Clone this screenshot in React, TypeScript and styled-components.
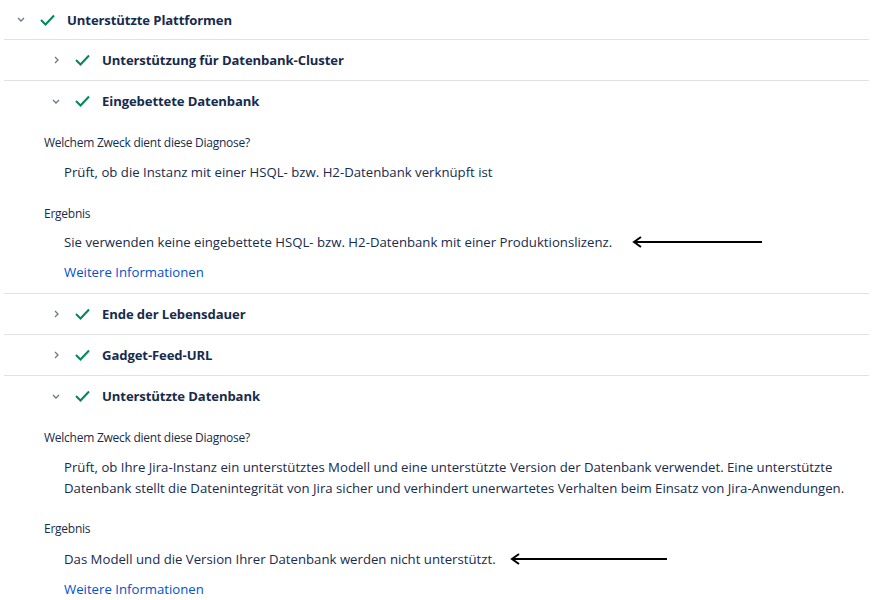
import React from 'react'
import styled, { createGlobalStyle } from 'styled-components'

const GlobalStyle = createGlobalStyle`
  body {
    margin: 0;
    background: #ffffff;
    font-family: "Open Sans", "Noto Sans", "Liberation Sans", sans-serif;
    color: #172b4d;
  }
`

const Page = styled.div`
  padding: 0 5px 0 4px;
  width: 874px;
  box-sizing: border-box;
`

const Section = styled.div<{ $divider?: boolean }>`
  border-top: ${({ $divider }) => ($divider ? '1px solid #dfe1e6' : 'none')};
`

const Header = styled.div<{ $level: number }>`
  display: flex;
  align-items: center;
  height: ${({ $level }) => ($level === 0 ? 39 : 40)}px;
  padding-left: ${({ $level }) => ($level === 0 ? 12 : 47)}px;
`

const Chevron = styled.span`
  display: flex;
  align-items: center;
  justify-content: center;
  width: 10px;
  color: #6b778c;
`

const Check = styled.span`
  display: flex;
  align-items: center;
  margin-left: 14px;
  margin-right: 12px;
  color: #00875a;
`

const Title = styled.span`
  font-size: 13.1px;
  font-weight: 700;
  color: #172b4d;
  letter-spacing: -0.1px;
`

const Body = styled.div`
  padding: 14px 0 11px 40px;
`

const Label = styled.div<{ $gap?: number }>`
  margin-top: ${({ $gap }) => $gap ?? 0}px;
  font-size: 12px;
  line-height: 16px;
  color: #172b4d;
  letter-spacing: -0.25px;
`

const Text = styled.div`
  margin: 11px 0 0 20px;
  font-size: 13.2px;
  line-height: 21px;
  color: #172b4d;
  max-width: 790px;
`

const Result = styled.div<{ $gap: number }>`
  display: flex;
  align-items: center;
  margin: ${({ $gap }) => $gap}px 0 0 20px;
  font-size: 13.2px;
  line-height: 20px;
  color: #172b4d;
`

const Link = styled.a`
  display: block;
  margin: 10px 0 0 20px;
  font-size: 13.2px;
  line-height: 20px;
  color: #0052cc;
  text-decoration: none;
`

const Arrow = styled.svg<{ $gap: number }>`
  margin-left: ${({ $gap }) => $gap}px;
  flex: none;
`

const ChevronDown = () => (
  <svg width="8" height="5" viewBox="0 0 8 5">
    <path d="M1 1 L4 4 L7 1" fill="none" stroke="currentColor" strokeWidth="1.3" />
  </svg>
)

const ChevronRight = () => (
  <svg width="5" height="8" viewBox="0 0 5 8">
    <path d="M1 1 L4 4 L1 7" fill="none" stroke="currentColor" strokeWidth="1.3" />
  </svg>
)

const CheckIcon = () => (
  <svg width="15" height="12" viewBox="0 0 15 12">
    <path d="M1 6 L5.5 10.5 L14 1.5" fill="none" stroke="currentColor" strokeWidth="2" />
  </svg>
)

const PointerArrow = ({ width, gap }: { width: number; gap: number }) => (
  <Arrow $gap={gap} width={width} height="12" viewBox={`0 0 ${width} 12`}>
    <line x1="2" y1="6" x2={width} y2="6" stroke="#000" strokeWidth="2" />
    <path d="M9 1 L2 6 L9 11" fill="none" stroke="#000" strokeWidth="2" />
  </Arrow>
)

interface Item {
  title: string
  open?: boolean
  purpose?: string
  gap?: number
  resultGap?: number
  result?: string
  arrowWidth?: number
  arrowGap?: number
}

const items: Item[] = [
  { title: 'Unterstützung für Datenbank-Cluster' },
  {
    title: 'Eingebettete Datenbank',
    open: true,
    purpose: 'Prüft, ob die Instanz mit einer HSQL- bzw. H2-Datenbank verknüpft ist',
    gap: 23,
    resultGap: 10,
    result: 'Sie verwenden keine eingebettete HSQL- bzw. H2-Datenbank mit einer Produktionslizenz.',
    arrowWidth: 130,
    arrowGap: 20,
  },
  { title: 'Ende der Lebensdauer' },
  { title: 'Gadget-Feed-URL' },
  {
    title: 'Unterstützte Datenbank',
    open: true,
    purpose:
      'Prüft, ob Ihre Jira-Instanz ein unterstütztes Modell und eine unterstützte Version der Datenbank verwendet. Eine unterstützte Datenbank stellt die Datenintegrität von Jira sicher und verhindert unerwartetes Verhalten beim Einsatz von Jira-Anwendungen.',
    gap: 22,
    resultGap: 12,
    result: 'Das Modell und die Version Ihrer Datenbank werden nicht unterstützt.',
    arrowWidth: 157,
    arrowGap: 14,
  },
]

export default function App() {
  return (
    <Page>
      <GlobalStyle />
      <Section>
        <Header $level={0}>
          <Chevron><ChevronDown /></Chevron>
          <Check><CheckIcon /></Check>
          <Title>Unterstützte Plattformen</Title>
        </Header>
      </Section>
      {items.map(item => (
        <Section key={item.title} $divider>
          <Header $level={1}>
            <Chevron>{item.open ? <ChevronDown /> : <ChevronRight />}</Chevron>
            <Check><CheckIcon /></Check>
            <Title>{item.title}</Title>
          </Header>
          {item.open && (
            <Body>
              <Label>Welchem Zweck dient diese Diagnose?</Label>
              <Text>{item.purpose}</Text>
              <Label $gap={item.gap}>Ergebnis</Label>
              <Result $gap={item.resultGap ?? 10}>
                {item.result}
                <PointerArrow width={item.arrowWidth ?? 130} gap={item.arrowGap ?? 20} />
              </Result>
              <Link href="#">Weitere Informationen</Link>
            </Body>
          )}
        </Section>
      ))}
    </Page>
  )
}
